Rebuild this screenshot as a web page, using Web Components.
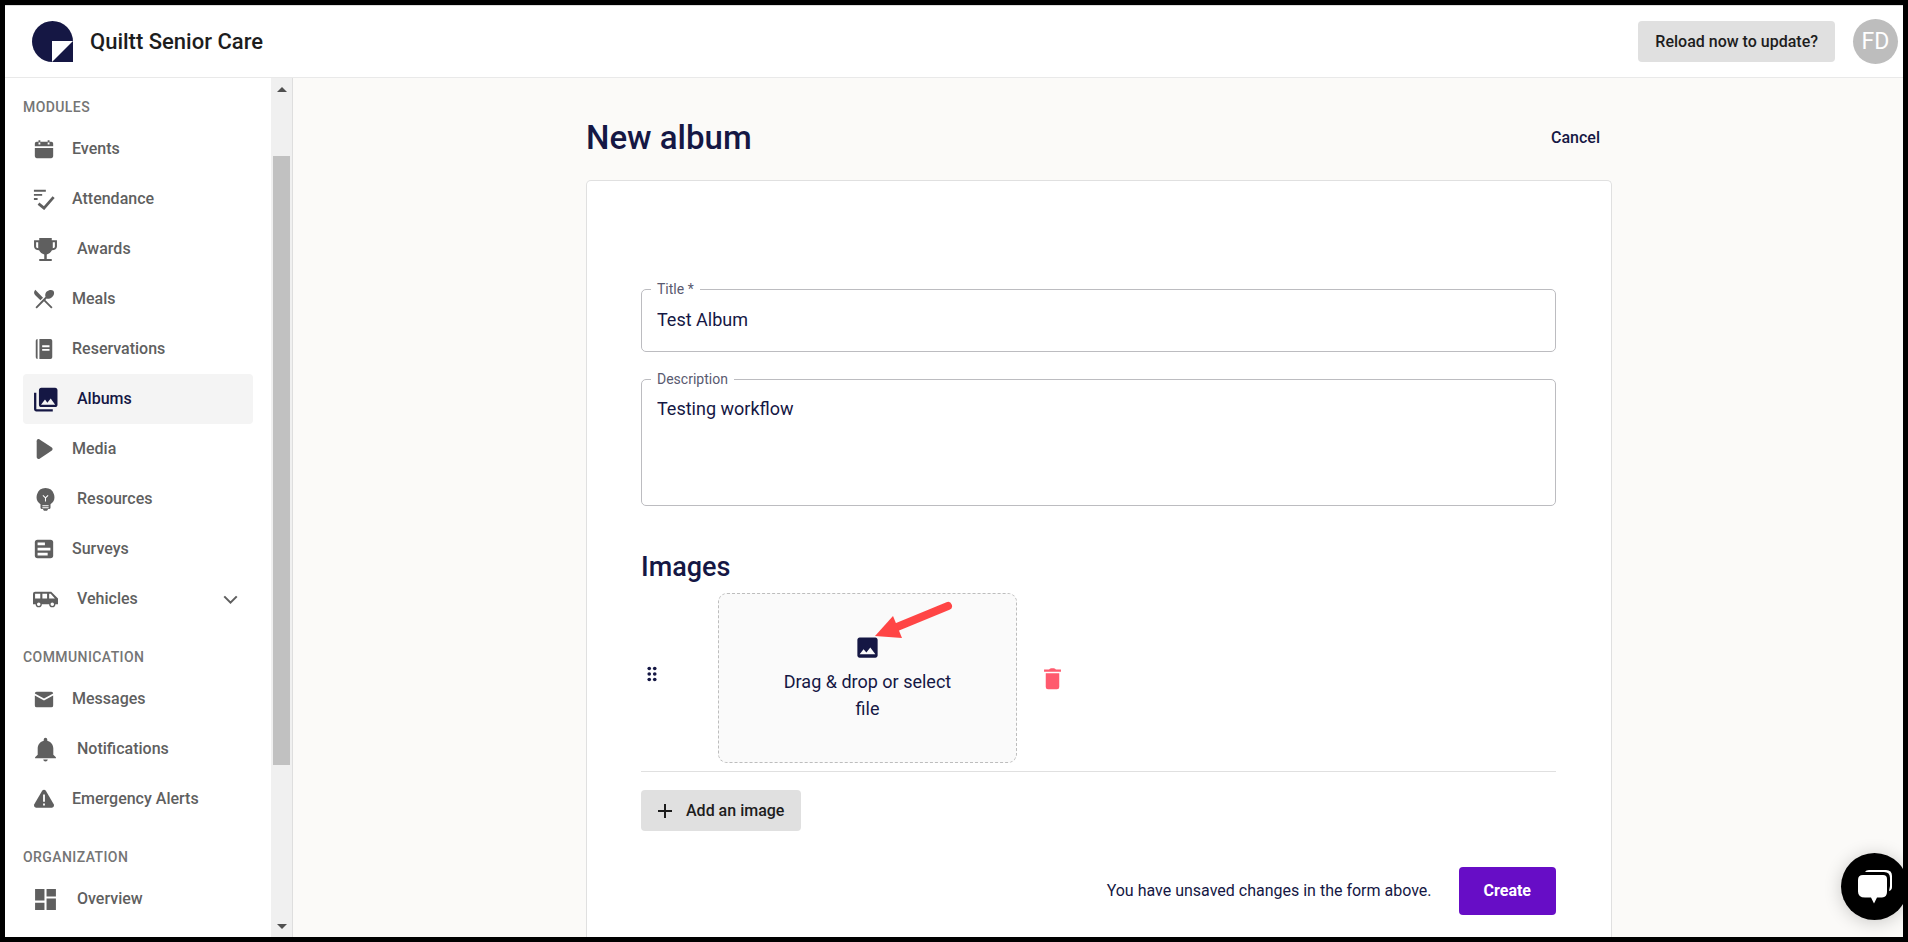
<!DOCTYPE html>
<html lang="en">
<head>
<meta charset="utf-8">
<title>New album</title>
<style>
html,body{height:100%}
body{margin:0;background:#000;font-family:Roboto,"Liberation Sans",sans-serif;color:#151744}
</style>
</head>
<body>
<album-app></album-app>
<script>
const define = (name, html, setup) => {
  const t = document.createElement('template');
  t.innerHTML = html;
  customElements.define(name, class extends HTMLElement {
    constructor() {
      super();
      this.attachShadow({mode: 'open'});
    }
    connectedCallback() {
      if (this.shadowRoot.childNodes.length) return;
      const content = t.content.cloneNode(true);
      if (setup) setup(this, content);
      this.shadowRoot.append(content);
    }
  });
};

const icons = {
  events: '<path d="M20 4h-2V2.500h-2V4H8V2.500H6V4H4a2 2 0 0 0-2 2v3h20V6a2 2 0 0 0-2-2zM2 11v9a2 2 0 0 0 2 2h16a2 2 0 0 0 2-2v-9z"/><path fill="#fff" d="M6 5h2v2H6zM16 5h2v2h-2z"/>',
  attendance: '<path d="M1 2h13v2H1zM1 6.500h9v2H1zM1 11h4v2H1z"/><path d="M6 17l6 5L22.500 10" fill="none" stroke="currentColor" stroke-width="3"/>',
  awards: '<path fill-rule="evenodd" d="M6 1h12v2h5v6c0 2-2 3.500-4.800 3.800C17 15 15.500 16.300 13.200 16.700V21H18v2H6v-2h4.800v-4.300C8.500 16.300 7 15 5.800 12.800 3 12.500 1 11 1 9V3h5zM3 5v4c0 .9.800 1.500 2 1.700V5zM21 5h-2v5.700c1.200-.2 2-.8 2-1.700z"/>',
  meals: '<path d="M8.100 13.340l2.830-2.830L2.500 2a4.500 4.500 0 0 0 0 6zM14.880 11.530c1.530.71 3.680.21 5.770-1.380 2.500-2 3-5.500 1.500-7.120-1.600-1.500-5-1.100-7.120.81-1.590 1.590-2.090 3.740-1.380 5.770L2.700 20.870l1.410 1.410L12 14.410l7.880 7.880 1.410-1.410L13.410 13l1.470-1.470z"/>',
  reservations: '<path d="M3 3a2 2 0 0 1 2-2v22a2 2 0 0 1-2-2zM7 1h12a2 2 0 0 1 2 2v18a2 2 0 0 1-2 2H7z"/><path stroke="#fff" stroke-width="2" d="M10 9h8M10 13h8"/>',
  albums: '<path d="M23.500 17V3c0-1.400-.9-2.300-2.300-2.300H8C6.600.7 5.700 1.600 5.700 3v14c0 1.400.9 2.300 2.300 2.300h13.200c1.400 0 2.300-.9 2.300-2.300zM11.500 12l2.300 3L17 11l4.300 6H7.700zM1 5.500v15.700C1 22.600 1.900 23.500 3.200 23.500H19v-2.200H3.200V5.500z"/>',
  media: '<path d="M4 3.500c0-2 1.500-3 3.200-2l13 8.500c1.500 1 1.500 3 0 4l-13 8.500C5.500 23.500 4 22.500 4 20.500z"/>',
  resources: '<path d="M12 1a8.500 8.500 0 0 0-4.800 15.500V20a1 1 0 0 0 1 1h1.300l1 1.800h3l1-1.800h1.300a1 1 0 0 0 1-1v-3.500A8.500 8.500 0 0 0 12 1z"/><path fill="none" stroke="#fff" stroke-width="1" d="M9 18h6M9 20h6M12 14v-3.500L9.500 8M12 10.500L14.500 8"/>',
  surveys: '<rect x="2" y="2" width="20" height="20" rx="3"/><path fill="#fff" d="M5 5h8v3H5zM5 10.500h14v3H5zM5 16h11v3H5z"/>',
  vehicles: '<path d="M17.500 4.500H2a2 2 0 0 0-2 2v10h2.500a3 3 0 0 0 6 0h7a3 3 0 0 0 6 0H24v-5.500l-6.500-6.500zM2 11V6.500h5V11zM5.500 18.200a1.700 1.700 0 1 1 0-3.400 1.700 1.700 0 0 1 0 3.400zM13.500 11H9V6.500h4.500zM18.500 18.200a1.700 1.700 0 1 1 0-3.400 1.700 1.700 0 0 1 0 3.400zM15.500 11V6.500H17l4 4.500z"/>',
  messages: '<path d="M2 6a2 2 0 0 1 2-2h16a2 2 0 0 1 2 2l-10 5.500zM2 8.200l10 5.500 10-5.500V19a2 2 0 0 1-2 2H4a2 2 0 0 1-2-2z"/>',
  notifications: '<path d="M12 23.500a2.300 2.300 0 0 0 2.200-2H9.800a2.300 2.300 0 0 0 2.200 2zM19.500 17V11c0-3.600-2.500-6.500-5.800-7.300V2.500a1.700 1.700 0 0 0-3.400 0v1.200C7 4.500 4.500 7.400 4.500 11v6l-2.500 2.500v1h20v-1z"/>',
  alerts: '<path d="M10 3c1-1.600 3-1.600 4 0l8.600 14.800c.9 1.600-.2 3.700-2 3.700H3.400c-1.800 0-2.900-2.100-2-3.700z"/><path stroke="#fff" stroke-width="2" d="M12 7v8M12 17v2"/>',
  overview: '<path d="M2 2h9v11H2zM2 15h9v7H2zM13 2h9v7h-9zM13 11h9v11h-9z"/>',
  image: '<path d="M21 19V5c0-1.100-.9-2-2-2H5c-1.100 0-2 .9-2 2v14c0 1.100.9 2 2 2h14c1.100 0 2-.9 2-2zM8.500 13.500l2.500 3.010L14.500 12l4.500 6H5l3.500-4.500z"/>',
  trash: '<path d="M6 19.500a2 2 0 0 0 2 2h8a2 2 0 0 0 2-2V7.300H6zM5 4h4c.5-1.400 5.500-1.400 6 0h4.500v2H4.500V4z"/>',
  chevron: '<path fill="none" stroke="currentColor" stroke-width="2" d="M6 9l6 6 6-6"/>',
  plus: '<path d="M19 13h-6v6h-2v-6H5v-2h6V5h2v6h6v2z"/>',
  drag: '<circle cx="9" cy="6" r="2"/><circle cx="15" cy="6" r="2"/><circle cx="9" cy="12" r="2"/><circle cx="15" cy="12" r="2"/><circle cx="9" cy="18" r="2"/><circle cx="15" cy="18" r="2"/>'
};

define('ui-icon', `<style>
:host{display:block;flex:none;width:24px;height:24px}
svg{display:block;width:100%;height:100%;fill:currentColor}
</style><svg viewBox="0 0 24 24" aria-hidden="true"></svg>`, (el, root) => {
  root.querySelector('svg').innerHTML = icons[el.getAttribute('name')];
});

define('nav-item', `<style>
:host{display:block}
a{display:flex;align-items:center;height:50px;box-sizing:border-box;padding:0 10px;border-radius:4px;color:#5f5f5f;text-decoration:none;font-size:16px;line-height:24px;font-weight:500}
ui-icon{width:22px;height:22px;margin-right:17px}
:host([large]) ui-icon{width:25px;height:25px;margin-right:19px}
:host([active]) a{background:#f4f4f4;color:#151744}
span{flex:1}
.more{display:none}
:host([expandable]) .more{display:block;margin-right:0}
</style><a href="#"><ui-icon></ui-icon><span><slot></slot></span><ui-icon class="more" name="chevron"></ui-icon></a>`, (el, root) => {
  root.querySelector('ui-icon').setAttribute('name', el.getAttribute('icon'));
  if (el.hasAttribute('active')) root.querySelector('a').setAttribute('aria-current', 'page');
});

define('nav-group', `<style>
:host{display:block;margin-bottom:14px}
h2{margin:0;padding-top:9px;height:27px;font-size:14px;line-height:20px;font-weight:500;color:#757575;letter-spacing:.03em;text-transform:uppercase}
</style><h2></h2><slot></slot>`, (el, root) => {
  root.querySelector('h2').textContent = el.getAttribute('heading');
});

define('side-bar', `<style>
:host{display:flex;flex:none;width:287px;border-right:1px solid #dedede;background:#fff;min-height:0}
nav{flex:1;overflow:hidden;padding:10px 18px 0}
.track{width:21px;background:#f0f0f0;display:grid;grid-template-rows:23px 55px 611fr 151fr 22px;justify-items:center;align-items:center}
.thumb{width:17px;height:100%;background:#c1c1c1;grid-row:3}
.up,.down{border:5px solid transparent;border-top:0;border-bottom-color:#505050}
.down{grid-row:5;border-top:5px solid #505050;border-bottom:0}
</style>
<nav>
<nav-group heading="Modules">
<nav-item icon="events">Events</nav-item>
<nav-item icon="attendance">Attendance</nav-item>
<nav-item icon="awards" large>Awards</nav-item>
<nav-item icon="meals">Meals</nav-item>
<nav-item icon="reservations">Reservations</nav-item>
<nav-item icon="albums" large active>Albums</nav-item>
<nav-item icon="media">Media</nav-item>
<nav-item icon="resources" large>Resources</nav-item>
<nav-item icon="surveys">Surveys</nav-item>
<nav-item icon="vehicles" large expandable>Vehicles</nav-item>
</nav-group>
<nav-group heading="Communication">
<nav-item icon="messages">Messages</nav-item>
<nav-item icon="notifications" large>Notifications</nav-item>
<nav-item icon="alerts">Emergency Alerts</nav-item>
</nav-group>
<nav-group heading="Organization">
<nav-item icon="overview" large>Overview</nav-item>
</nav-group>
</nav>
<div class="track" aria-hidden="true"><i class="up"></i><i class="thumb"></i><i class="down"></i></div>`);

define('ui-button', `<style>
:host{display:block}
button{display:flex;align-items:center;height:41px;padding:0 17px;border:0;border-radius:4px;background:#e0e0e0;color:#1d1d1d;font:500 16px/24px Roboto,"Liberation Sans",sans-serif;white-space:nowrap}
:host([variant=primary]) button{height:48px;padding:0 25px;background:#670dc6;color:#fff;font-weight:700}
:host([variant=text]) button{padding:0 12px;background:none;color:#151744}
:host([lead]) button{padding:0 17px 0 12px;gap:9px}
</style><button type="button"><slot></slot></button>`);

define('app-header', `<style>
:host{display:flex;align-items:center;height:71px;flex:none;background:#fff;border-top:1px solid #ddd;border-bottom:1px solid #e9e9e9;padding:0 5px 0 27px}
svg{width:41px;height:41px;margin-right:17px}
strong{flex:1;font-size:22px;line-height:28px;font-weight:500;color:#1d1d1d}
.avatar{width:45px;height:45px;margin-left:18px;border-radius:50%;background:#bdbdbd;color:#fff;display:grid;place-items:center;font-size:23px;line-height:28px}
</style>
<svg viewBox="0 0 41 41" aria-hidden="true"><circle cx="20.500" cy="20.500" r="20.500" fill="#151744"/><path fill="#151744" d="M20 20h21v21H20z"/><path fill="#fff" d="M20 20h21L20 41z"/></svg>
<strong>Quiltt Senior Care</strong>
<ui-button>Reload now to update?</ui-button>
<div class="avatar">FD</div>`);

define('text-field', `<style>
:host{display:block}
fieldset{margin:0;min-width:0;border:1px solid #bcbcc0;border-radius:5px;padding:0 15px}
legend{margin-left:-6px;padding:0 6px;font-size:14px;line-height:18px;height:18px;color:#595a70}
input,textarea{display:block;box-sizing:border-box;width:100%;padding:0;border:0;outline:0;background:none;resize:none;color:#151744;font:400 18px/27px Roboto,"Liberation Sans",sans-serif}
input{height:27px;margin:8px 0 18px}
textarea{height:110px;margin:7px 0 0}
</style><fieldset><legend><label for="control"></label></legend></fieldset>`, (el, root) => {
  const control = document.createElement(el.hasAttribute('multiline') ? 'textarea' : 'input');
  control.id = 'control';
  control.value = el.getAttribute('value');
  root.querySelector('label').textContent = el.getAttribute('label');
  root.querySelector('fieldset').append(control);
});

define('image-row', `<style>
:host{display:flex;align-items:center;padding-bottom:8px;border-bottom:1px solid #e0e0e0}
button{font:inherit;color:inherit;background:none;border:0;padding:0}
.drag{margin-right:55px;padding-bottom:8px}
.drag ui-icon{width:22px;height:22px}
.drop{position:relative;box-sizing:border-box;width:299px;height:170px;border:1px dashed #bdbdbd;border-radius:9px;background:#fafafa;display:flex;flex-direction:column;align-items:center;justify-content:center;font-size:18px;line-height:27px;text-align:center}
.drop ui-icon{width:27px;height:27px;margin-bottom:7px}
.drop span{width:180px}
.arrow{position:absolute;left:156px;top:7px;width:80px;height:38px}
.del{color:#ff5a6e;margin-left:22px}
.del ui-icon{width:27px;height:27px}
</style>
<button class="drag" type="button" aria-label="Reorder"><ui-icon name="drag"></ui-icon></button>
<button class="drop" type="button"><ui-icon name="image"></ui-icon><span>Drag &amp; drop or select file</span>
<svg class="arrow" viewBox="0 0 80 38" aria-hidden="true"><path d="M73 5L22 26" stroke="#ff4545" stroke-width="8" stroke-linecap="round"/><path d="M0 35L18 15l9 22z" fill="#ff4545"/></svg></button>
<button class="del" type="button" aria-label="Delete image"><ui-icon name="trash"></ui-icon></button>`);

define('album-form', `<style>
:host{display:flex;flex-direction:column;flex:none;width:1026px;max-width:calc(100% - 36px);margin:0 auto}
header{display:flex;align-items:center;justify-content:space-between;height:102px;flex:none;box-sizing:border-box;padding-top:18px}
h1{margin:0;font-size:33px;line-height:42px;font-weight:500}
form{flex:1;background:#fff;border:1px solid #e0e0e0;border-bottom:0;border-radius:5px 5px 0 0;padding:99px 55px 0 54px}
text-field+text-field{margin-top:18px}
h2{margin:43px 0 8px;font-size:27px;line-height:36px;font-weight:500}
.add{display:flex;margin-top:18px}
footer{display:flex;align-items:center;justify-content:flex-end;gap:27px;margin-top:36px;font-size:16px;line-height:24px;padding-bottom:36px}
</style>
<header><h1>New album</h1><ui-button variant="text">Cancel</ui-button></header>
<form>
<text-field label="Title *" value="Test Album"></text-field>
<text-field label="Description" value="Testing workflow" multiline></text-field>
<h2>Images</h2>
<image-row></image-row>
<div class="add"><ui-button lead><ui-icon name="plus"></ui-icon>Add an image</ui-button></div>
<footer><span>You have unsaved changes in the form above.</span><ui-button variant="primary">Create</ui-button></footer>
</form>`);

define('chat-launcher', `<style>
:host{position:absolute;right:-5px;bottom:17px;display:block}
button{display:grid;place-items:center;width:67px;height:67px;border:0;padding:0;border-radius:50%;background:#000;box-shadow:0 2px 18px #0003}
svg{width:40px;height:40px}
</style><button type="button" aria-label="Open chat"><svg viewBox="0 0 40 40" aria-hidden="true"><path fill="#fff" d="M10 5q1-2 4-2h17q6 0 6 6v11q0 3-3 4l1-5v-8q0-6-6-6z"/><path fill="#fff" d="M8 8h20q4 0 4 4v13q0 5-5 5.500h-5l-3 6-3-6h-6q-7 0-7-6V13q0-5 5-5z"/></svg></button>`);

define('album-app', `<style>
:host{display:flex;flex-direction:column;position:relative;height:100vh;box-sizing:border-box;border:5px solid #000;overflow:hidden}
.body{flex:1;display:flex;min-height:0}
main{flex:1;min-width:0;display:flex;padding-left:2px;background:#fbfaf8;overflow:hidden}
</style>
<app-header></app-header>
<div class="body"><side-bar></side-bar><main><album-form></album-form></main></div>
<chat-launcher></chat-launcher>`);
</script>
</body>
</html>
